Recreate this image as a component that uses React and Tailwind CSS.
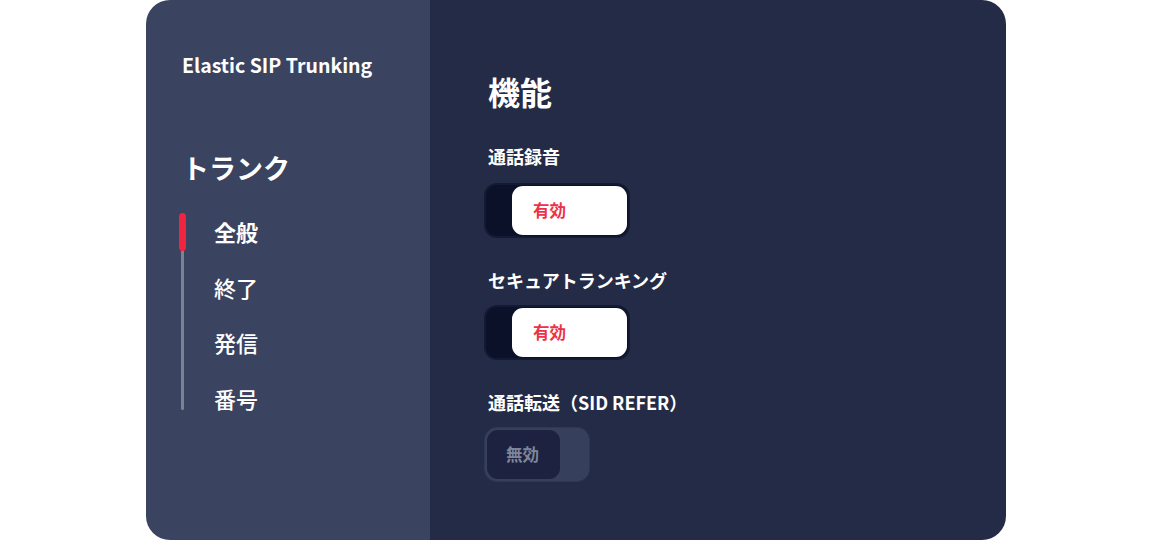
export default function App() {
  const font = { fontFamily: '"Noto Sans CJK JP", "Noto Sans", sans-serif' };
  const nav = ["全般", "終了", "発信", "番号"];
  return (
    <div className="w-full h-[541px] bg-white flex justify-center" style={font}>
      <div className="w-[860px] h-[540px] rounded-[24px] overflow-hidden flex">
        <aside className="w-[284px] bg-[#3a435f] pl-[36px] pt-[50px] flex flex-col">
          <div className="text-white text-[19.5px] font-semibold leading-[30px]">Elastic SIP Trunking</div>
          <div className="text-white text-[27px] font-bold leading-[40px] mt-[68px]">トランク</div>
          <div className="relative mt-[16px] pl-[32px]">
            <div className="absolute left-[-1px] top-[9px] h-[197px] w-[3px] rounded-full bg-[#7b8296]"></div>
            <div className="absolute left-[-3px] top-[9px] h-[38px] w-[7px] rounded-full bg-[#f0243e]"></div>
            <ul className="flex flex-col">
              {nav.map((n, i) => (
                <li
                  key={n}
                  className={`text-white text-[22px] leading-[55.5px] ${i === 0 ? "font-bold" : "font-medium"}`}
                >
                  {n}
                </li>
              ))}
            </ul>
          </div>
        </aside>
        <main className="flex-1 bg-[#242b46] pl-[58px] pt-[67px] flex flex-col">
          <h1 className="text-white text-[32px] font-bold leading-[48px]">機能</h1>
          <div className="text-white text-[18px] font-bold leading-[24px] mt-[29px]">通話録音</div>
          <div className="mt-[15px] ml-[-4px] w-[146px] h-[55px] rounded-[13px] bg-[#0b1128] border-[2px] border-[#131a33] flex items-center justify-end pr-[1px]">
            <div className="w-[115px] h-[49px] rounded-[11px] bg-white flex items-center pl-[21px] text-[#ec3148] text-[16.5px] font-bold">有効</div>
          </div>
          <div className="text-white text-[18px] font-bold leading-[24px] mt-[30px]">セキュアトランキング</div>
          <div className="mt-[13px] ml-[-4px] w-[146px] h-[55px] rounded-[13px] bg-[#0b1128] border-[2px] border-[#131a33] flex items-center justify-end pr-[1px]">
            <div className="w-[115px] h-[49px] rounded-[11px] bg-white flex items-center pl-[21px] text-[#ec3148] text-[16.5px] font-bold">有効</div>
          </div>
          <div className="text-white text-[18px] font-bold leading-[24px] mt-[30px]">通話転送（SID REFER）</div>
          <div className="mt-[13px] ml-[-4px] w-[106px] h-[55px] rounded-[13px] bg-[#363f5c] border border-[#2f3754] flex items-center pl-[2px]">
            <div className="w-[73px] h-[49px] rounded-[11px] bg-[#1c2240] flex items-center pl-[19px] text-[#7f869c] text-[16.5px] font-bold">無効</div>
          </div>
        </main>
      </div>
    </div>
  );
}
